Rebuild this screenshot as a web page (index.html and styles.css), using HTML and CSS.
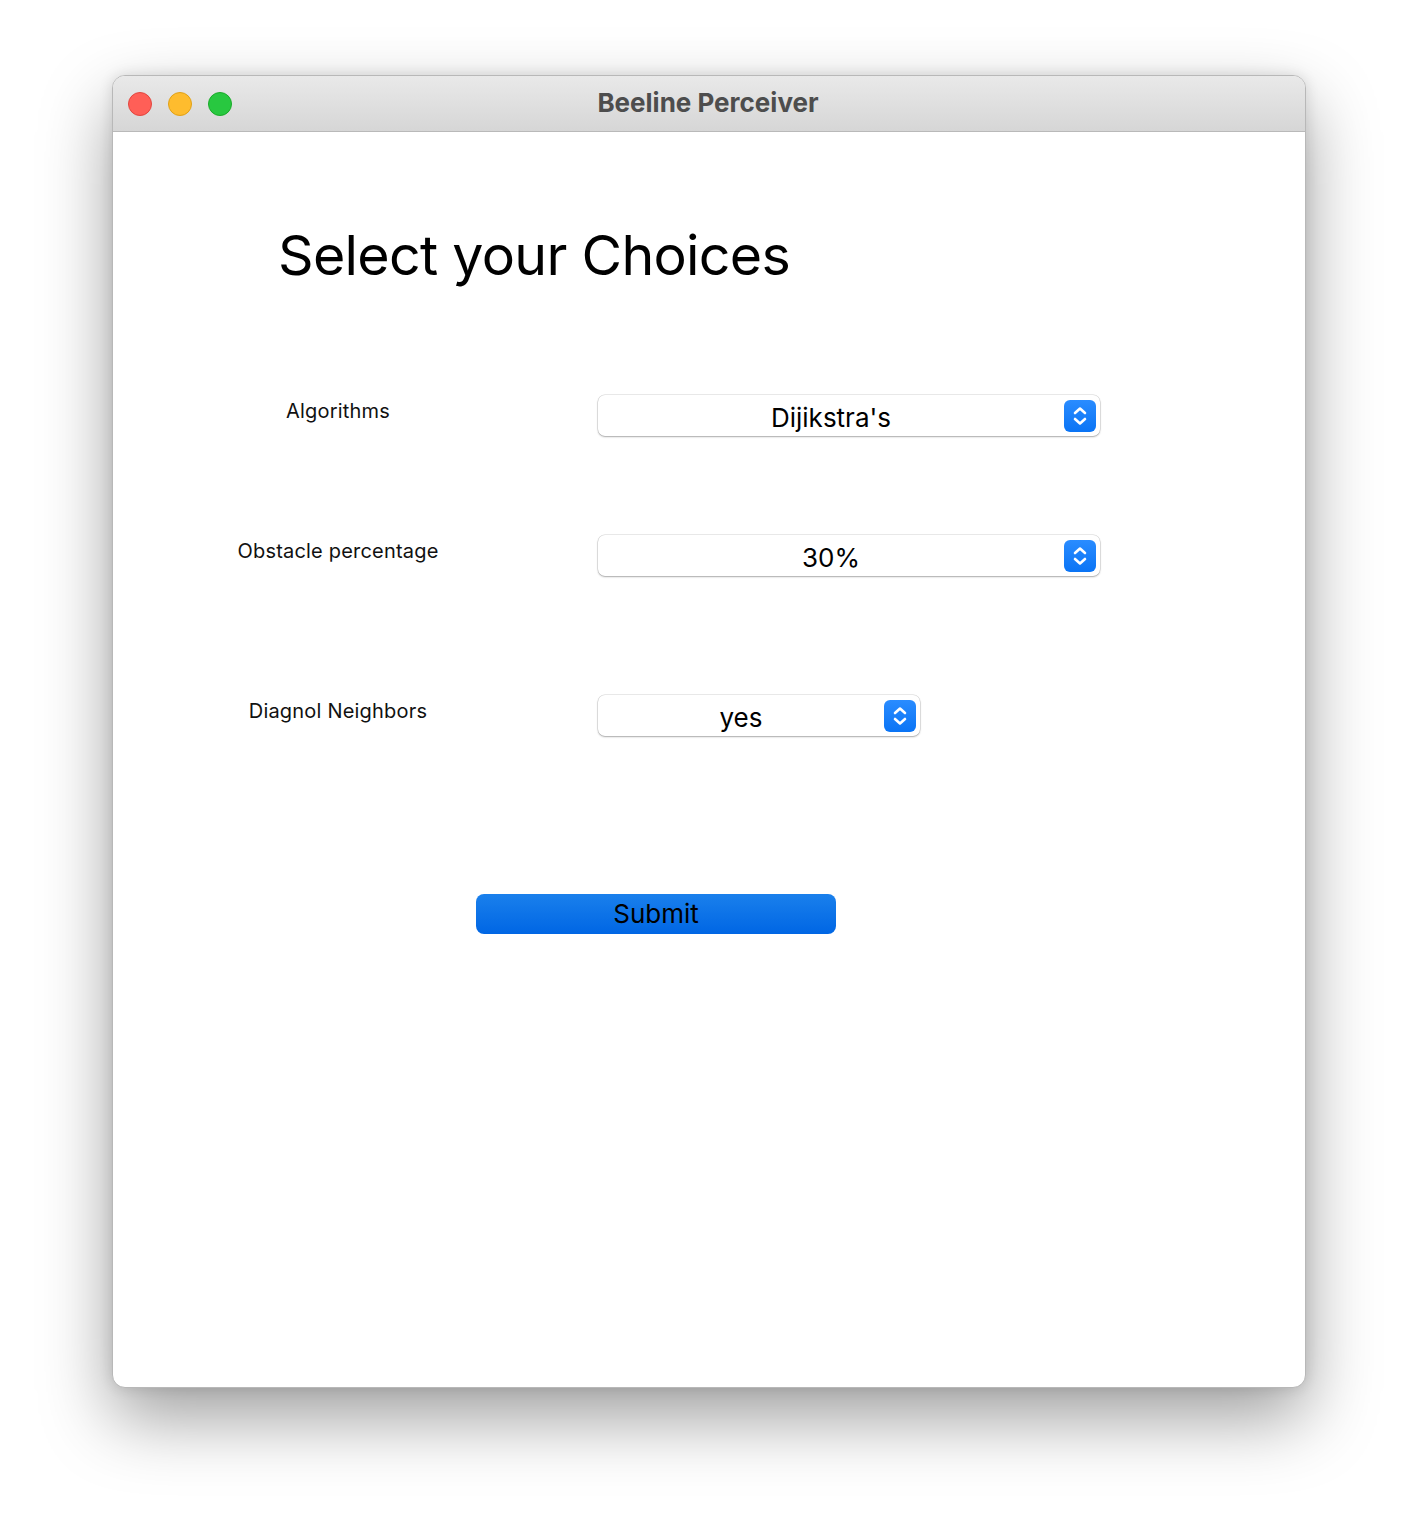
FILE: index.html
```html
<!DOCTYPE html>
<html>
<head>
<meta charset="utf-8">
<link rel="stylesheet" href="styles.css">
</head>
<body>
<div class="window">
  <div class="titlebar">
    <div class="lights">
      <span class="light red"></span>
      <span class="light yellow"></span>
      <span class="light green"></span>
    </div>
    <div class="title">Beeline Perceiver</div>
  </div>
  <div class="content">
    <h1 class="heading">Select your Choices</h1>
    <div class="row row1">
      <div class="label">Algorithms</div>
      <div class="select wide">
        <span class="value">Dijikstra's</span>
        <span class="arrows"><svg width="32" height="32" viewBox="0 0 32 32"><path d="M11 13 L16 8.5 L21 13" fill="none" stroke="#fff" stroke-width="2.6" stroke-linecap="round" stroke-linejoin="round"/><path d="M11 19 L16 23.5 L21 19" fill="none" stroke="#fff" stroke-width="2.6" stroke-linecap="round" stroke-linejoin="round"/></svg></span>
      </div>
    </div>
    <div class="row row2">
      <div class="label">Obstacle percentage</div>
      <div class="select wide">
        <span class="value">30%</span>
        <span class="arrows"><svg width="32" height="32" viewBox="0 0 32 32"><path d="M11 13 L16 8.5 L21 13" fill="none" stroke="#fff" stroke-width="2.6" stroke-linecap="round" stroke-linejoin="round"/><path d="M11 19 L16 23.5 L21 19" fill="none" stroke="#fff" stroke-width="2.6" stroke-linecap="round" stroke-linejoin="round"/></svg></span>
      </div>
    </div>
    <div class="row row3">
      <div class="label">Diagnol Neighbors</div>
      <div class="select narrow">
        <span class="value">yes</span>
        <span class="arrows"><svg width="32" height="32" viewBox="0 0 32 32"><path d="M11 13 L16 8.5 L21 13" fill="none" stroke="#fff" stroke-width="2.6" stroke-linecap="round" stroke-linejoin="round"/><path d="M11 19 L16 23.5 L21 19" fill="none" stroke="#fff" stroke-width="2.6" stroke-linecap="round" stroke-linejoin="round"/></svg></span>
      </div>
    </div>
    <div class="submit-row">
      <button class="submit">Submit</button>
    </div>
  </div>
</div>
</body>
</html>
```
FILE: styles.css
```css
html, body {
  margin: 0;
  padding: 0;
  background: #ffffff;
}
body {
  width: 1418px;
  height: 1536px;
  overflow: hidden;
  font-family: Inter, "Liberation Sans", sans-serif;
  padding-top: 75px;
  box-sizing: border-box;
}
.window {
  margin-left: 112px;
  width: 1194px;
  height: 1313px;
  box-sizing: border-box;
  background: #ffffff;
  border-radius: 13px;
  border: 1px solid #b8b8b8;
  box-shadow: 0 30px 70px rgba(0,0,0,0.38), 0 0 14px rgba(0,0,0,0.12);
  overflow: hidden;
  display: flex;
  flex-direction: column;
}
.titlebar {
  height: 55px;
  flex: none;
  background: linear-gradient(#e9e9e9, #d6d6d6);
  border-bottom: 1px solid #b9b9b9;
  display: flex;
  align-items: center;
  position: relative;
}
.lights {
  display: flex;
  gap: 16px;
  padding-left: 15px;
}
.light {
  width: 24px;
  height: 24px;
  border-radius: 50%;
  box-sizing: border-box;
}
.red { background: #ff5f57; border: 1px solid #e2463f; }
.yellow { background: #febc2e; border: 1px solid #e1a116; }
.green { background: #28c840; border: 1px solid #1aab29; }
.title {
  position: absolute;
  left: 0;
  right: 0;
  top: 0;
  bottom: 0;
  display: flex;
  align-items: center;
  justify-content: center;
  font-weight: 700;
  font-size: 26px;
  color: #4d4d4d;
  padding-bottom: 2px;
  padding-right: 2px;
}
.content {
  flex: 1;
  display: flex;
  flex-direction: column;
}
.heading {
  margin: 86px 0 0 165px;
  font-weight: 400;
  font-size: 55.5px;
  line-height: 74px;
  letter-spacing: -0.7px;
  color: #000;
}
.row {
  display: flex;
  align-items: flex-start;
}
.row1 { margin-top: 103px; }
.row2 { margin-top: 99px; }
.row3 { margin-top: 119px; }
.label {
  width: 450px;
  text-align: center;
  font-size: 20px;
  line-height: 24px;
  padding-top: 4px;
  color: #111;
  letter-spacing: 0.2px;
}
.select {
  margin-left: 35px;
  height: 41px;
  box-sizing: border-box;
  background: #fff;
  border-radius: 7px;
  box-shadow: 0 0 0 0.5px rgba(0,0,0,0.16), 0 1px 2px rgba(0,0,0,0.28);
  display: flex;
  align-items: center;
  padding-right: 4px;
}
.wide { width: 502px; }
.narrow { width: 322px; }
.value {
  flex: 1;
  text-align: center;
  font-size: 26px;
  color: #000;
  padding-top: 3px;
}
.arrows {
  width: 32px;
  height: 32px;
  border-radius: 6px;
  background: linear-gradient(#2a8cff, #0a74f5);
  display: flex;
}
.submit-row {
  margin-top: 158px;
  padding-left: 363px;
}
.submit {
  width: 360px;
  height: 40px;
  border: none;
  border-radius: 8px;
  background: linear-gradient(#1a80ec, #0066e4);
  font-family: Inter, "Liberation Sans", sans-serif;
  font-size: 26px;
  color: #000;
  padding: 0 0 2px 0;
}
```
